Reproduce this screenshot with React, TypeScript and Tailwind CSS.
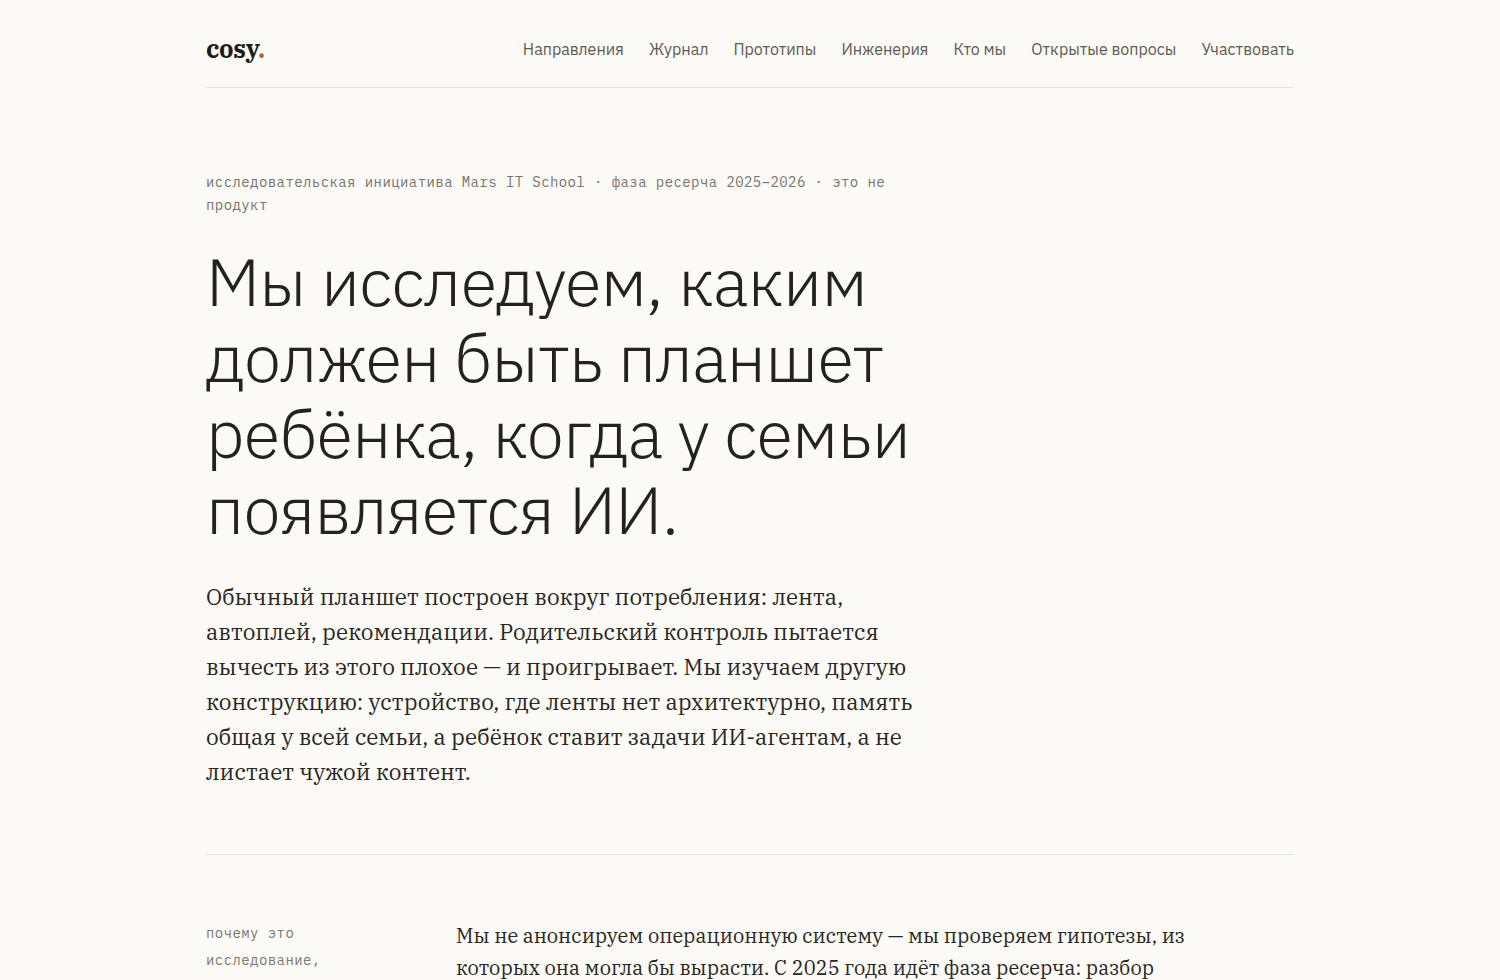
import React from "react";

const links = [
  "Направления",
  "Журнал",
  "Прототипы",
  "Инженерия",
  "Кто мы",
  "Открытые вопросы",
  "Участвовать",
];

const sans = "font-['IBM_Plex_Sans','Noto_Sans',Inter,sans-serif]";
const mono = "font-['IBM_Plex_Mono','DejaVu_Sans_Mono','Liberation_Mono',monospace]";
const serif = "font-['IBM_Plex_Serif','DejaVu_Serif','Liberation_Serif',serif]";

const Header = () => (
  <header className="flex items-center justify-between pt-[36px] pb-[25px] border-b border-[#e8e4df]">
    <a href="#" className={`${serif} text-[25px] leading-[26px] font-bold text-[#1f1c19] tracking-[-0.01em]`}>
      cosy<span className="text-[#b0623f]">.</span>
    </a>
    <nav className={`${sans} flex items-center gap-[25px] text-[16px] leading-[24px] text-[#5f5a54]`}>
      {links.map((l) => (
        <a key={l} href="#" className="hover:text-[#1f1c19]">
          {l}
        </a>
      ))}
    </nav>
  </header>
);

const Hero = () => (
  <section className="pt-[83px] pb-[65px] border-b border-[#e8e4df]">
    <p className={`${mono} max-w-[700px] text-[14px] leading-[23px] tracking-[0.03em] text-[#78736c]`}>
      исследовательская инициатива Mars IT School · фаза ресерча 2025–2026 · это не продукт
    </p>
    <h1
      className={`${sans} mt-[26px] max-w-[720px] text-[67px] leading-[76px] font-light tracking-[-0.01em] text-[#25211d]`}
    >
      Мы исследуем, каким должен быть планшет ребёнка, когда у семьи появляется ИИ.
    </h1>
    <p className={`${serif} mt-[32px] max-w-[720px] text-[22.5px] leading-[35px] text-[#2a2622]`}>
      Обычный планшет построен вокруг потребления: лента, автоплей, рекомендации. Родительский
      контроль пытается вычесть из этого плохое — и проигрывает. Мы изучаем другую конструкцию:
      устройство, где ленты нет архитектурно, память общая у всей семьи, а ребёнок ставит задачи
      ИИ-агентам, а не листает чужой контент.
    </p>
  </section>
);

const Why = () => (
  <section className="grid grid-cols-[250px_1fr] pt-[65px] pb-20">
    <p className={`${mono} max-w-[120px] text-[14px] leading-[27px] tracking-[0.03em] text-[#7d7871]`}>
      почему это исследование, а не продукт
    </p>
    <p className={`${serif} max-w-[730px] text-[20px] leading-[32px] text-[#2a2622]`}>
      Мы не анонсируем операционную систему — мы проверяем гипотезы, из которых она могла бы
      вырасти. С 2025 года идёт фаза ресерча: разбор существующих решений, интервью с семьями,
      прототипы и открытые вопросы, на которые у нас пока нет ответа.
    </p>
  </section>
);

export default function App() {
  return (
    <div className="min-h-screen bg-[#fbfaf7]">
      <div className="mx-auto w-[1088px]">
        <Header />
        <Hero />
        <Why />
      </div>
    </div>
  );
}
